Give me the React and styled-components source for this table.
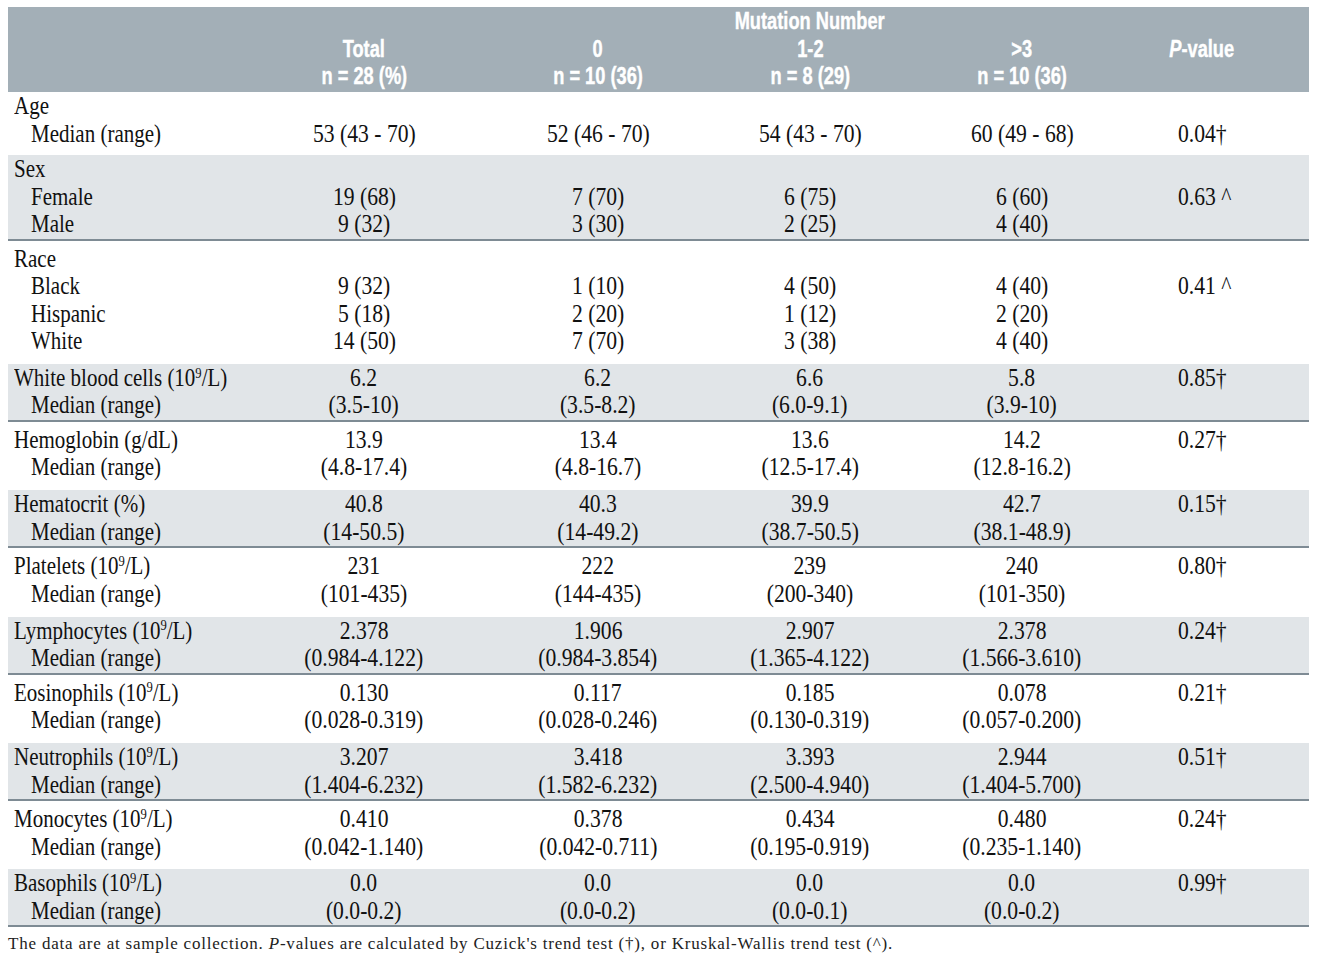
import React from "react";
import styled, { createGlobalStyle } from "styled-components";

const Global = createGlobalStyle`
  html, body { margin: 0; padding: 0; background: #fff; }
  body { font-family: "Liberation Serif", "Times New Roman", serif; color: #111; }
`;

const Page = styled.div`
  padding: 7px 0 0 8px;
  width: 1301px;
`;

const COLS = "242px 228px 240px 184px 240px 167px";

const Header = styled.div`
  display: grid;
  grid-template-columns: ${COLS};
  background: #a3afb7;
  padding-bottom: 2.5px;
  font-family: "Liberation Sans", Arial, sans-serif;
  font-weight: 700;
  font-size: 24px;
  line-height: 27.5px;
  color: #fff;
`;

const HeadCell = styled.div`
  grid-column: ${(p) => p.$col || "auto"};
  grid-row: ${(p) => p.$row || "auto"};
  text-align: center;
  padding-right: ${(p) => (p.$pcol ? "47px" : "0")};
`;

const HeadText = styled.span`
  display: inline-block;
  transform: scaleX(0.76);
  transform-origin: center;
  white-space: nowrap;
  -webkit-text-stroke: 0.4px #fff;
`;

const Group = styled.div`
  background: ${(p) => (p.$gray ? "#e1e5e8" : "#fff")};
  padding-top: ${(p) => (p.$gray || p.$first ? "0" : "4px")};
  padding-bottom: ${(p) => (p.$gray ? "1px" : p.$first ? "8px" : "9.4px")};
  border-bottom: ${(p) => (p.$gray ? "2px solid #7e8b94" : "none")};
`;

const Line = styled.div`
  display: grid;
  grid-template-columns: ${COLS};
  font-size: 25px;
  line-height: 27.5px;
  height: 27.5px;
  color: #111;
`;

const LabelCell = styled.div`
  padding-left: ${(p) => (p.$indent ? "23px" : "6px")};
  white-space: nowrap;
`;

const ValueCell = styled.div`
  text-align: center;
  white-space: nowrap;
`;

const PCell = styled.div`
  padding-left: 36px;
  white-space: nowrap;
`;

const Txt = styled.span`
  display: inline-block;
  transform: scaleX(${(p) => (p.$label ? 0.84 : 0.865)});
  transform-origin: ${(p) => p.$origin || "center"};
  white-space: nowrap;
`;

const Sup = styled.span`
  font-size: 60%;
  position: relative;
  top: -0.55em;
  line-height: 0;
`;

const Note = styled.div`
  margin-top: 7px;
  font-size: 17px;
  line-height: 20px;
  letter-spacing: 0.8px;
  color: #222;
  white-space: nowrap;
`;

const unit = (name) => (
  <>
    {name} (10<Sup>9</Sup>/L)
  </>
);

const groups = [
  {
    lines: [
      { label: "Age" },
      {
        label: "Median (range)",
        indent: true,
        vals: ["53 (43 - 70)", "52 (46 - 70)", "54 (43 - 70)", "60 (49 - 68)"],
        p: "0.04†",
      },
    ],
  },
  {
    gray: true,
    lines: [
      { label: "Sex" },
      { label: "Female", indent: true, vals: ["19 (68)", "7 (70)", "6 (75)", "6 (60)"], p: "0.63 ^" },
      { label: "Male", indent: true, vals: ["9 (32)", "3 (30)", "2 (25)", "4 (40)"] },
    ],
  },
  {
    lines: [
      { label: "Race" },
      { label: "Black", indent: true, vals: ["9 (32)", "1 (10)", "4 (50)", "4 (40)"], p: "0.41 ^" },
      { label: "Hispanic", indent: true, vals: ["5 (18)", "2 (20)", "1 (12)", "2 (20)"] },
      { label: "White", indent: true, vals: ["14 (50)", "7 (70)", "3 (38)", "4 (40)"] },
    ],
  },
];

const labs = [
  [unit("White blood cells"), ["6.2", "6.2", "6.6", "5.8"], ["(3.5-10)", "(3.5-8.2)", "(6.0-9.1)", "(3.9-10)"], "0.85†"],
  ["Hemoglobin (g/dL)", ["13.9", "13.4", "13.6", "14.2"], ["(4.8-17.4)", "(4.8-16.7)", "(12.5-17.4)", "(12.8-16.2)"], "0.27†"],
  ["Hematocrit (%)", ["40.8", "40.3", "39.9", "42.7"], ["(14-50.5)", "(14-49.2)", "(38.7-50.5)", "(38.1-48.9)"], "0.15†"],
  [unit("Platelets"), ["231", "222", "239", "240"], ["(101-435)", "(144-435)", "(200-340)", "(101-350)"], "0.80†"],
  [unit("Lymphocytes"), ["2.378", "1.906", "2.907", "2.378"], ["(0.984-4.122)", "(0.984-3.854)", "(1.365-4.122)", "(1.566-3.610)"], "0.24†"],
  [unit("Eosinophils"), ["0.130", "0.117", "0.185", "0.078"], ["(0.028-0.319)", "(0.028-0.246)", "(0.130-0.319)", "(0.057-0.200)"], "0.21†"],
  [unit("Neutrophils"), ["3.207", "3.418", "3.393", "2.944"], ["(1.404-6.232)", "(1.582-6.232)", "(2.500-4.940)", "(1.404-5.700)"], "0.51†"],
  [unit("Monocytes"), ["0.410", "0.378", "0.434", "0.480"], ["(0.042-1.140)", "(0.042-0.711)", "(0.195-0.919)", "(0.235-1.140)"], "0.24†"],
  [unit("Basophils"), ["0.0", "0.0", "0.0", "0.0"], ["(0.0-0.2)", "(0.0-0.2)", "(0.0-0.1)", "(0.0-0.2)"], "0.99†"],
];

labs.forEach(([label, meds, ranges, p], i) => {
  groups.push({
    gray: i % 2 === 0,
    lines: [
      { label, vals: meds, p },
      { label: "Median (range)", indent: true, vals: ranges },
    ],
  });
});

function Row({ line }) {
  const vals = line.vals || ["", "", "", ""];
  return (
    <Line>
      <LabelCell $indent={line.indent}>
        <Txt $origin="left" $label>
          {line.label}
        </Txt>
      </LabelCell>
      {vals.map((v, i) => (
        <ValueCell key={i}>
          <Txt>{v}</Txt>
        </ValueCell>
      ))}
      <PCell>
        <Txt $origin="left">{line.p || ""}</Txt>
      </PCell>
    </Line>
  );
}

export default function App() {
  return (
    <>
      <Global />
      <Page>
        <Header>
          <HeadCell $col="3 / 6" $row="1">
            <HeadText>Mutation Number</HeadText>
          </HeadCell>
          <HeadCell $col="2" $row="2 / 3">
            <HeadText>Total</HeadText>
          </HeadCell>
          <HeadCell $col="2" $row="3">
            <HeadText>n = 28 (%)</HeadText>
          </HeadCell>
          <HeadCell $col="3" $row="2">
            <HeadText>0</HeadText>
          </HeadCell>
          <HeadCell $col="3" $row="3">
            <HeadText>n = 10 (36)</HeadText>
          </HeadCell>
          <HeadCell $col="4" $row="2">
            <HeadText>1-2</HeadText>
          </HeadCell>
          <HeadCell $col="4" $row="3">
            <HeadText>n = 8 (29)</HeadText>
          </HeadCell>
          <HeadCell $col="5" $row="2">
            <HeadText>&gt;3</HeadText>
          </HeadCell>
          <HeadCell $col="5" $row="3">
            <HeadText>n = 10 (36)</HeadText>
          </HeadCell>
          <HeadCell $col="6" $row="2" $pcol>
            <HeadText>
              <i>P</i>-value
            </HeadText>
          </HeadCell>
        </Header>
        {groups.map((g, gi) => (
          <Group key={gi} $gray={g.gray} $first={gi === 0}>
            {g.lines.map((l, li) => (
              <Row key={li} line={l} />
            ))}
          </Group>
        ))}
        <Note>
          The data are at sample collection. <i>P</i>-values are calculated by Cuzick's trend test (†), or Kruskal-Wallis
          trend test (^).
        </Note>
      </Page>
    </>
  );
}
